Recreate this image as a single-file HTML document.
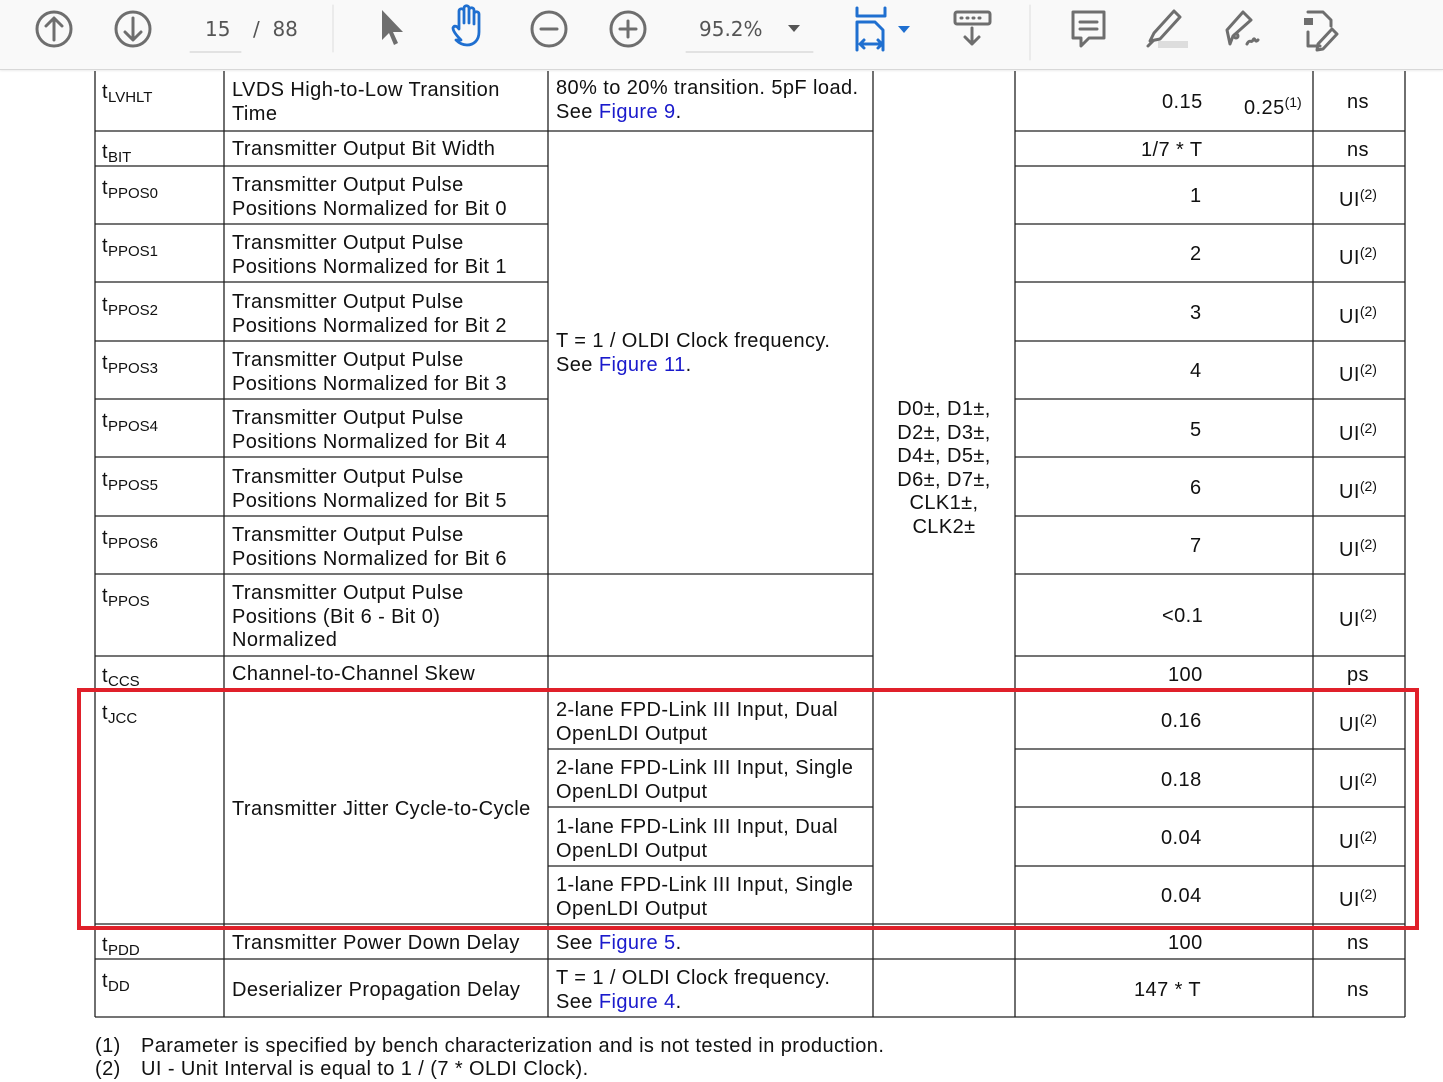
<!DOCTYPE html>
<html><head><meta charset="utf-8"><style>
*{margin:0;padding:0;box-sizing:border-box}
body{width:1443px;height:1080px;background:#fff;position:relative;overflow:hidden;font-family:"Liberation Sans",Arial,sans-serif;color:#111}
.tb{position:absolute;left:0;top:0;width:1443px;height:70px;background:#f9f9f9;border-bottom:1px solid #d8d8d8;box-shadow:0 1px 2px rgba(0,0,0,.08)}
.t{position:absolute;font-size:20px;line-height:23.5px;white-space:nowrap;letter-spacing:0.42px;margin-top:1px}
.t sub{font-size:15px;vertical-align:-4px;letter-spacing:0}
.t sup{font-size:14px;vertical-align:7px;letter-spacing:0}
.b{color:#1a1acc}
.c{text-align:center}
.tbt{position:absolute;font-size:20px;color:#555;font-family:"DejaVu Sans","Liberation Sans",sans-serif}
</style></head><body>
<div class="tb">
<svg width="1443" height="70" style="position:absolute;left:0;top:0" fill="none" stroke="#6e6e6e" stroke-width="3" stroke-linecap="round" stroke-linejoin="round">
<circle cx="54" cy="29" r="17"/><path d="M54 40V19M46 26l8-8 8 8"/>
<circle cx="133" cy="29" r="17"/><path d="M133 18v21M125 32l8 8 8-8"/>
<line x1="190" y1="52" x2="241" y2="52" stroke="#ccc" stroke-width="1"/>
<line x1="333" y1="5" x2="333" y2="52" stroke="#ddd" stroke-width="1"/>
<path d="M382 10l0 30 7-7 5 12 4-2-5-11 10 0z" fill="#6e6e6e" stroke="none"/>
<path d="M461 40c-4-4-8-9-8-12 1-3 4-2 6 1v-18c0-3 5-3 5 0v12-15c0-3 5-3 5 0v15-13c0-3 5-3 5 0v14-10c0-3 5-3 5 0v18c0 8-5 13-12 13-4 0-8-2-11-5z" stroke="#1f6fd0" stroke-width="2.8"/>
<circle cx="549" cy="29" r="17"/><path d="M541 29h16"/>
<circle cx="628" cy="29" r="17"/><path d="M620 29h16M628 21v16"/>
<line x1="686" y1="52" x2="813" y2="52" stroke="#ccc" stroke-width="1"/>
<path d="M788 25h12l-6 7z" fill="#555" stroke="none"/>
<path d="M857 8v8h28V8M857 50V22h18l8 8v20M861 44h20M864 40l-4 4 4 4M878 40l4 4-4 4" stroke="#1f6fd0"/>
<path d="M898 26h12l-6 7z" fill="#1f6fd0" stroke="none"/>
<rect x="955" y="12" width="35" height="12" rx="2"/><path d="M961 18h1M967 18h1M973 18h1M979 18h1M972 28v16M965 37l7 7 7-7"/>
<line x1="1030" y1="5" x2="1030" y2="60" stroke="#ddd" stroke-width="1"/>
<path d="M1073 12h31v26h-15l-8 8v-8h-8z"/><path d="M1080 22h17M1080 29h17"/>
<path d="M1150 41l4-8 20-22 6 6-20 22z"/><path d="M1148 46l5-5"/><rect x="1158" y="41" width="30" height="7" fill="#ddd" stroke="none"/>
<path d="M1230 44l-3-14 16-18 8 8-18 16z"/><circle cx="1236" cy="36" r="2"/><path d="M1247 44c3-6 4 0 6-4s2 4 5 0"/>
<path d="M1308 12h15l8 8v6M1308 32v14h12M1318 44l14-15 5 5-14 15-6 1z"/><rect x="1304" y="18" width="9" height="7" fill="#6e6e6e" stroke="none"/>
</svg>
<div class="tbt" style="left:205px;top:17px">15</div>
<div class="tbt" style="left:253px;top:17px">/&nbsp; 88</div>
<div class="tbt" style="left:699px;top:17px">95.2%</div>
</div>

<svg width="1443" height="1080" style="position:absolute;left:0;top:0" stroke="#222" stroke-width="1.3">
<g>
<line x1="95" y1="71" x2="95" y2="1017"/><line x1="224" y1="71" x2="224" y2="1017"/><line x1="548" y1="71" x2="548" y2="1017"/><line x1="873" y1="71" x2="873" y2="1017"/><line x1="1015" y1="71" x2="1015" y2="1017"/><line x1="1313" y1="71" x2="1313" y2="1017"/><line x1="1405" y1="71" x2="1405" y2="1017"/>
<line x1="95" y1="131" x2="873" y2="131"/><line x1="1015" y1="131" x2="1405" y2="131"/>
<line x1="95" y1="166" x2="548" y2="166"/><line x1="1015" y1="166" x2="1405" y2="166"/>
<line x1="95" y1="224" x2="548" y2="224"/><line x1="1015" y1="224" x2="1405" y2="224"/>
<line x1="95" y1="282" x2="548" y2="282"/><line x1="1015" y1="282" x2="1405" y2="282"/>
<line x1="95" y1="341" x2="548" y2="341"/><line x1="1015" y1="341" x2="1405" y2="341"/>
<line x1="95" y1="399" x2="548" y2="399"/><line x1="1015" y1="399" x2="1405" y2="399"/>
<line x1="95" y1="457" x2="548" y2="457"/><line x1="1015" y1="457" x2="1405" y2="457"/>
<line x1="95" y1="516" x2="548" y2="516"/><line x1="1015" y1="516" x2="1405" y2="516"/>
<line x1="95" y1="574" x2="873" y2="574"/><line x1="1015" y1="574" x2="1405" y2="574"/>
<line x1="95" y1="656" x2="873" y2="656"/><line x1="1015" y1="656" x2="1405" y2="656"/>
<line x1="95" y1="691" x2="873" y2="691"/><line x1="1015" y1="691" x2="1405" y2="691"/>
<line x1="548" y1="749" x2="873" y2="749"/><line x1="1015" y1="749" x2="1405" y2="749"/>
<line x1="548" y1="807" x2="873" y2="807"/><line x1="1015" y1="807" x2="1405" y2="807"/>
<line x1="548" y1="866" x2="873" y2="866"/><line x1="1015" y1="866" x2="1405" y2="866"/>
<line x1="95" y1="924" x2="1405" y2="924"/><line x1="95" y1="959" x2="1405" y2="959"/><line x1="95" y1="1017" x2="1405" y2="1017"/>
</g>
<rect x="79" y="690" width="1338" height="238" fill="none" stroke="#e0202a" stroke-width="4"/>
</svg>

<div class="t" style="left:102px;top:80px">t<sub>LVHLT</sub></div>
<div class="t" style="left:232px;top:78px">LVDS High-to-Low Transition<br>Time</div>
<div class="t" style="left:556px;top:76px">80% to 20% transition. 5pF load.<br>See <span class="b">Figure 9</span>.</div>
<div class="t" style="left:1162px;top:90px">0.15</div>
<div class="t" style="left:1244px;top:90px">0.25<sup>(1)</sup></div>
<div class="t" style="left:1347px;top:90px">ns</div>

<div class="t" style="left:102px;top:140px">t<sub>BIT</sub></div>
<div class="t" style="left:232px;top:137px">Transmitter Output Bit Width</div>
<div class="t" style="left:1141px;top:138px">1/7 * T</div>
<div class="t" style="left:1347px;top:138px">ns</div>

<div class="t" style="left:102px;top:176px">t<sub>PPOS0</sub></div>
<div class="t" style="left:232px;top:173px">Transmitter Output Pulse<br>Positions Normalized for Bit 0</div>
<div class="t" style="left:1190px;top:184px">1</div><div class="t" style="left:1339px;top:182px">UI<sup>(2)</sup></div>

<div class="t" style="left:102px;top:234px">t<sub>PPOS1</sub></div>
<div class="t" style="left:232px;top:231px">Transmitter Output Pulse<br>Positions Normalized for Bit 1</div>
<div class="t" style="left:1190px;top:242px">2</div><div class="t" style="left:1339px;top:240px">UI<sup>(2)</sup></div>

<div class="t" style="left:102px;top:293px">t<sub>PPOS2</sub></div>
<div class="t" style="left:232px;top:290px">Transmitter Output Pulse<br>Positions Normalized for Bit 2</div>
<div class="t" style="left:1190px;top:301px">3</div><div class="t" style="left:1339px;top:299px">UI<sup>(2)</sup></div>

<div class="t" style="left:102px;top:351px">t<sub>PPOS3</sub></div>
<div class="t" style="left:232px;top:348px">Transmitter Output Pulse<br>Positions Normalized for Bit 3</div>
<div class="t" style="left:1190px;top:359px">4</div><div class="t" style="left:1339px;top:357px">UI<sup>(2)</sup></div>

<div class="t" style="left:102px;top:409px">t<sub>PPOS4</sub></div>
<div class="t" style="left:232px;top:406px">Transmitter Output Pulse<br>Positions Normalized for Bit 4</div>
<div class="t" style="left:1190px;top:418px">5</div><div class="t" style="left:1339px;top:416px">UI<sup>(2)</sup></div>

<div class="t" style="left:102px;top:468px">t<sub>PPOS5</sub></div>
<div class="t" style="left:232px;top:465px">Transmitter Output Pulse<br>Positions Normalized for Bit 5</div>
<div class="t" style="left:1190px;top:476px">6</div><div class="t" style="left:1339px;top:474px">UI<sup>(2)</sup></div>

<div class="t" style="left:102px;top:526px">t<sub>PPOS6</sub></div>
<div class="t" style="left:232px;top:523px">Transmitter Output Pulse<br>Positions Normalized for Bit 6</div>
<div class="t" style="left:1190px;top:534px">7</div><div class="t" style="left:1339px;top:532px">UI<sup>(2)</sup></div>

<div class="t" style="left:556px;top:329px">T = 1 / OLDI Clock frequency.<br>See <span class="b">Figure 11</span>.</div>
<div class="t c" style="left:873px;width:142px;top:397px">D0±, D1±,<br>D2±, D3±,<br>D4±, D5±,<br>D6±, D7±,<br>CLK1±,<br>CLK2±</div>

<div class="t" style="left:102px;top:584px">t<sub>PPOS</sub></div>
<div class="t" style="left:232px;top:581px">Transmitter Output Pulse<br>Positions (Bit 6 - Bit 0)<br>Normalized</div>
<div class="t" style="left:1162px;top:604px">&lt;0.1</div><div class="t" style="left:1339px;top:602px">UI<sup>(2)</sup></div>

<div class="t" style="left:102px;top:664px">t<sub>CCS</sub></div>
<div class="t" style="left:232px;top:662px">Channel-to-Channel Skew</div>
<div class="t" style="left:1168px;top:663px">100</div><div class="t" style="left:1347px;top:663px">ps</div>

<div class="t" style="left:102px;top:701px">t<sub>JCC</sub></div>
<div class="t" style="left:232px;top:797px">Transmitter Jitter Cycle-to-Cycle</div>
<div class="t" style="left:556px;top:698px">2-lane FPD-Link III Input, Dual<br>OpenLDI Output</div>
<div class="t" style="left:556px;top:756px">2-lane FPD-Link III Input, Single<br>OpenLDI Output</div>
<div class="t" style="left:556px;top:815px">1-lane FPD-Link III Input, Dual<br>OpenLDI Output</div>
<div class="t" style="left:556px;top:873px">1-lane FPD-Link III Input, Single<br>OpenLDI Output</div>
<div class="t" style="left:1161px;top:709px">0.16</div><div class="t" style="left:1339px;top:707px">UI<sup>(2)</sup></div>
<div class="t" style="left:1161px;top:768px">0.18</div><div class="t" style="left:1339px;top:766px">UI<sup>(2)</sup></div>
<div class="t" style="left:1161px;top:826px">0.04</div><div class="t" style="left:1339px;top:824px">UI<sup>(2)</sup></div>
<div class="t" style="left:1161px;top:884px">0.04</div><div class="t" style="left:1339px;top:882px">UI<sup>(2)</sup></div>

<div class="t" style="left:102px;top:933px">t<sub>PDD</sub></div>
<div class="t" style="left:232px;top:931px">Transmitter Power Down Delay</div>
<div class="t" style="left:556px;top:931px">See <span class="b">Figure 5</span>.</div>
<div class="t" style="left:1168px;top:931px">100</div><div class="t" style="left:1347px;top:931px">ns</div>

<div class="t" style="left:102px;top:969px">t<sub>DD</sub></div>
<div class="t" style="left:232px;top:978px">Deserializer Propagation Delay</div>
<div class="t" style="left:556px;top:966px">T = 1 / OLDI Clock frequency.<br>See <span class="b">Figure 4</span>.</div>
<div class="t" style="left:1134px;top:978px">147 * T</div><div class="t" style="left:1347px;top:978px">ns</div>

<div class="t" style="left:95px;top:1034px">(1)</div><div class="t" style="left:141px;top:1034px">Parameter is specified by bench characterization and is not tested in production.</div>
<div class="t" style="left:95px;top:1057px">(2)</div><div class="t" style="left:141px;top:1057px">UI - Unit Interval is equal to 1 / (7 * OLDI Clock).</div>
</body></html>
